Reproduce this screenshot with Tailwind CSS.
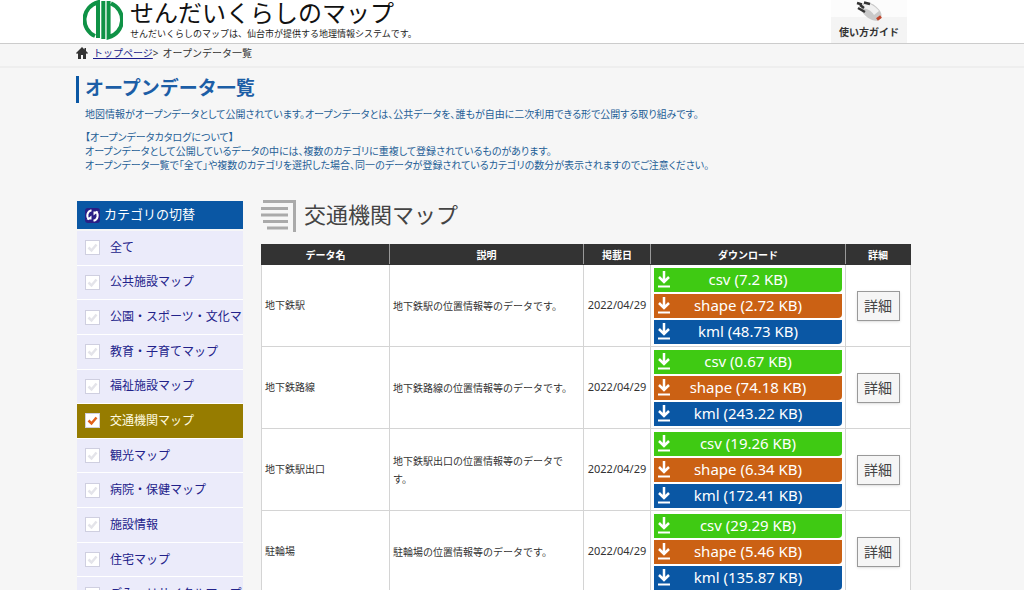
<!DOCTYPE html>
<html lang="ja">
<head>
<meta charset="utf-8">
<meta name="viewport" content="width=device-width, initial-scale=1">
<title>オープンデータ一覧 | せんだいくらしのマップ</title>
<script src="https://cdn.jsdelivr.net/npm/@tailwindcss/browser@4"></script>
</head>
<body class="bg-[#f6f6f6] font-['Noto_Sans','Noto_Sans_CJK_JP',sans-serif] text-[#333]">
<svg class="hidden" aria-hidden="true">
  <symbol id="dl" viewBox="0 0 12 17"><path d="M6 0v11M1 6 6 11l5-5" fill="none" stroke="#fff" stroke-width="2.500"/><path d="M0 15.500h12" stroke="#fff" stroke-width="2"/></symbol>
  <symbol id="ck" viewBox="0 0 15 15"><path d="M3.500 7.500 6.500 10.500 11.500 4.500" fill="none" stroke="currentColor" stroke-width="2.500"/></symbol>
</svg>

<header class="flex h-11 justify-between border-b border-[#ccc] bg-white pl-[83px] pr-[117px]">
  <div class="flex gap-[7px]">
    <svg class="h-10 w-10 shrink-0" viewBox="0 0 40 40" role="img" aria-label="仙台市">
      <g fill="none" stroke="#0f9246" stroke-width="4">
        <path d="M12 36A18 18 0 0 1 15 2.200V38"/>
        <path d="M20.300 1v38"/>
        <path d="M25.600 1V37.300A18 18 0 0 0 28 3.300"/>
      </g>
    </svg>
    <div>
      <p class="text-2xl leading-[26px] text-[#111]">せんだいくらしのマップ</p>
      <p class="text-[9px] leading-4 text-[#222]">せんだいくらしのマップは、仙台市が提供する地理情報システムです。</p>
    </div>
  </div>
  <a href="#guide" class="flex w-[76px] flex-col items-center bg-linear-to-b from-[#fcfcfc] from-40% to-[#f4f4f4] to-40% text-[10px] leading-4 font-bold">
    <svg class="h-6 w-7" viewBox="0 0 28 24" aria-hidden="true">
      <path d="M8 4C13 1 19 3 24 9.500 28 14 27 19 23 20.500 18 22 10 17 7 11.500 5 8 5.500 5.500 8 4Z" fill="#c9c9c9"/>
      <path d="M9 4.500C14 2 20 6 24 11L19 15C16 10 12 9 7 8Z" fill="#f0f0f0"/>
      <path d="M2 3 7 4.500M3 8 10 12M9 2.500 15 4M5 5 9 8" stroke="#333" stroke-width="2.500"/>
      <path d="M22 19.500 26 16.500" stroke="#c0452c" stroke-width="3"/>
    </svg>
    使い方ガイド
  </a>
</header>

<nav class="flex h-6 items-center border-b-2 border-[#eeeeee] pb-1 pl-[76px] text-[10px]" aria-label="パンくず">
  <svg class="mr-[5px] h-3 w-3" viewBox="0 0 12 12" aria-hidden="true"><path d="M6 0 0 6l1 1 1-.8V12h3V8h2v4h3V6.200l1 .8 1-1-2-2V1H8.500v1.500Z" fill="#333"/></svg>
  <a href="#top" class="text-[#1d1d8c] underline">トップページ</a><span class="mr-1">&gt;</span><span>オープンデータ一覧</span>
</nav>

<main class="pl-[76px] pr-[113px] pt-2">
  <h1 class="border-l-[3px] border-[#0a57a4] pl-[6px] text-[19px] leading-[25px] pb-[2px] font-bold text-[#1c5ea6]">オープンデータ一覧</h1>
  <div class="mt-1 pl-[9px] text-[10px] leading-[14px] text-[#1f5f96] [font-feature-settings:'palt']">
    <p>地図情報がオープンデータとして公開されています。オープンデータとは、公共データを、誰もが自由に二次利用できる形で公開する取り組みです。</p>
    <p class="mt-[9px]">【オープンデータカタログについて】<br>オープンデータとして公開しているデータの中には、複数のカテゴリに重複して登録されているものがあります。<br>オープンデータ一覧で「全て」や複数のカテゴリを選択した場合、同一のデータが登録されているカテゴリの数分が表示されますのでご注意ください。</p>
  </div>

  <div class="mt-7 flex items-start gap-[17px]">
    <form class="w-[168px] shrink-0 px-px pt-px">
      <h2 class="flex h-7 items-center gap-[4px] bg-[#0a57a4] pl-2 text-[13px] text-white">
        <svg class="h-[15px] w-[15px]" viewBox="0 0 15 15" aria-hidden="true"><rect width="15" height="15" rx="3" fill="#2a1f86"/><g fill="none" stroke="#fff" stroke-width="2"><path d="M6.500 2.200A5.500 5.500 0 0 0 4 11.500"/><path d="M8.500 12.800A5.500 5.500 0 0 0 11 3.500"/></g><path d="M1.500 11.500h5v-4ZM13.500 3.500h-5v4Z" fill="#fff"/></svg>
        カテゴリの切替
      </h2>
      <div id="cats" class="mt-[2px] grid h-[380px] auto-rows-fr gap-px bg-white text-[12px] text-[#22228a]"></div>
    </form>

    <section class="min-w-0 grow">
      <h2 class="flex items-start gap-2 text-[22px] leading-[28px] text-[#444]">
        <svg class="h-[33px] w-[35px]" viewBox="0 0 35 33" aria-hidden="true"><g fill="none" stroke="#aaa" stroke-width="3"><path d="M2 1.500H33.500V32"/><path d="M0 8.500h27M0 15h27M2 21.500h25M6 28h21"/></g></svg>
        交通機関マップ
      </h2>
      <table class="mt-[11px] w-full table-fixed border-collapse bg-white text-[10px]">
        <colgroup><col class="w-[128px]"><col><col class="w-[67px]"><col class="w-[195px]"><col class="w-[65px]"></colgroup>
        <thead class="bg-[#333] text-white">
          <tr class="h-5 leading-4">
            <th class="border border-[#333] border-r-[#999]">データ名</th><th class="border border-[#333] border-r-[#999]">説明</th><th class="border border-[#333] border-r-[#999]">掲載日</th><th class="border border-[#333] border-r-[#999]">ダウンロード</th><th class="border border-[#333]">詳細</th>
          </tr>
        </thead>
        <tbody id="rows"></tbody>
      </table>
    </section>
  </div>
</main>

<script>
const cats = ['全て','公共施設マップ','公園・スポーツ・文化マ','教育・子育てマップ','福祉施設マップ','交通機関マップ','観光マップ','病院・保健マップ','施設情報','住宅マップ','ごみ・リサイクルマップ'];
document.getElementById('cats').innerHTML = cats.map((c, i) => `
  <label class="flex items-center gap-[10px] overflow-hidden bg-[#ebebfa] pl-2 whitespace-nowrap has-checked:bg-[#967c00] has-checked:text-[#fffbe0]">
    <span class="grid shrink-0">
      <input type="checkbox" class="peer col-start-1 row-start-1 h-[15px] w-[15px] appearance-none border border-[#cfcfe0] bg-white" ${c === '交通機関マップ' ? 'checked' : ''}>
      <svg class="pointer-events-none col-start-1 row-start-1 h-[15px] w-[15px] text-[#e4e4ea] peer-checked:text-[#e2601c]"><use href="#ck"/></svg>
    </span>${c}</label>`).join('');

const rows = [
  ['地下鉄駅','7.2','2.72','48.73'],
  ['地下鉄路線','0.67','74.18','243.22'],
  ['地下鉄駅出口','19.26','6.34','172.41'],
  ['駐輪場','29.29','5.46','135.87'],
];
const kinds = [['csv','bg-[#3fca13]'],['shape','bg-[#cb6114]'],['kml','bg-[#0a57a4]']];
document.getElementById('rows').innerHTML = rows.map(r => `
  <tr class="h-[82px]">
    <td class="border border-[#d4d4d4] px-[3px]">${r[0]}</td>
    <td class="border border-[#d4d4d4] px-[3px] leading-[18px]">${r[0]}の位置情報等のデータです。</td>
    <td class="border border-[#d4d4d4] text-center text-[11px]">2022/04/29</td>
    <td class="border border-[#d4d4d4] px-[3px]"><div class="grid gap-[2px]">${kinds.map(([k, bg], i) => `
      <a href="#${k}" class="flex h-6 items-center rounded-br-[4px] pl-1 text-[15px] text-white ${bg}"><svg class="h-[17px] w-3 shrink-0"><use href="#dl"/></svg><span class="grow pr-4 text-center">${k} (${r[i + 1]} KB)</span></a>`).join('')}</div></td>
    <td class="border border-[#d4d4d4] text-center"><button type="button" class="h-[30px] w-[43px] border border-[#999] bg-[#f5f5f5] text-[14px] text-[#444] shadow-sm">詳細</button></td>
  </tr>`).join('');
</script>
</body>
</html>
